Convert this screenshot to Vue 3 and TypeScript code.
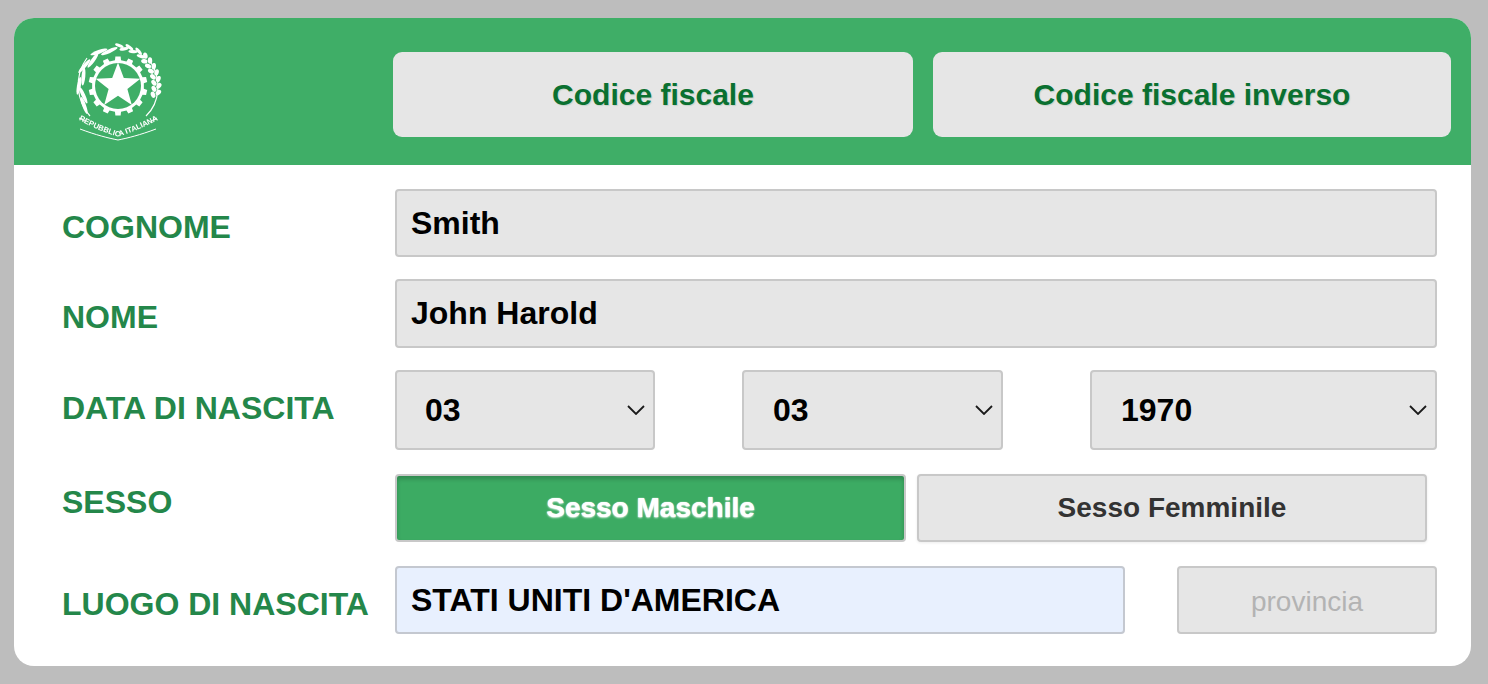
<script setup lang="ts">
import { ref } from 'vue'

const cx = 68
const cy = 61

function polar(r: number, deg: number): string {
  const a = (deg * Math.PI) / 180
  return `${(cx + r * Math.cos(a)).toFixed(2)} ${(cy + r * Math.sin(a)).toFixed(2)}`
}

function gearPath(): string {
  const teeth = 14
  const step = 360 / teeth
  let d = ''
  for (let i = 0; i < teeth; i++) {
    const s = i * step - 90
    d += `${i === 0 ? 'M' : 'L'}${polar(26, s - step * 0.26)} L${polar(29.5, s - step * 0.2)} L${polar(29.5, s + step * 0.2)} L${polar(26, s + step * 0.26)} `
  }
  return d + 'Z'
}

function starPath(r: number): string {
  let d = ''
  for (let i = 0; i < 10; i++) {
    const rad = i % 2 === 0 ? r : r * 0.42
    d += `${i === 0 ? 'M' : 'L'}${polar(rad, -90 + i * 36)} `
  }
  return d + 'Z'
}

interface Leaf { x: number; y: number; rot: number; rx: number; ry: number }

function leaves(start: number, end: number, count: number, radius: number, rx: number, ry: number, tilt: number, spread: number): Leaf[] {
  const out: Leaf[] = []
  for (let i = 0; i < count; i++) {
    const deg = start + ((end - start) * i) / (count - 1)
    const a = (deg * Math.PI) / 180
    const off = i % 2 === 0 ? spread : -spread
    out.push({
      x: cx + (radius + off) * Math.cos(a),
      y: cy + (radius + off) * Math.sin(a),
      rot: deg + 90 + (i % 2 === 0 ? tilt : -tilt),
      rx,
      ry,
    })
  }
  return out
}

const gear = gearPath()
const star = starPath(23.5)
const leftLeaves = leaves(150, 256, 8, 37.5, 9, 1.9, 10, 1.6)
const rightLeaves = [
  ...leaves(-88, -52, 6, 39, 4.6, 1.6, 20, 1.4),
  ...leaves(-48, 14, 14, 38.5, 3.2, 2.2, 35, 2.4),
]

const cognome = ref('Smith')
const nome = ref('John Harold')
const luogo = ref("STATI UNITI D'AMERICA")
const giorno = ref('03')
const mese = ref('03')
const anno = ref('1970')
</script>

<template>
  <main class="card">
    <header class="top">
      <svg class="emblem" viewBox="0 0 140 125" width="140" height="125" role="img" aria-label="Repubblica Italiana">
        <g class="soft">
          <path class="stem" d="M40 91 C26 76 24 50 37 33" />
          <path class="stem" d="M96 91 C110 78 112 54 100 36" />
          <ellipse
            v-for="(l, i) in leftLeaves"
            :key="'l' + i"
            :cx="l.x"
            :cy="l.y"
            :rx="l.rx"
            :ry="l.ry"
            :transform="`rotate(${l.rot} ${l.x} ${l.y})`"
            fill="#fff"
          />
          <ellipse
            v-for="(l, i) in rightLeaves"
            :key="'r' + i"
            :cx="l.x"
            :cy="l.y"
            :rx="l.rx"
            :ry="l.ry"
            :transform="`rotate(${l.rot} ${l.x} ${l.y})`"
            fill="#fff"
          />
          <path :d="gear" fill="#fff" />
          <circle :cx="cx" :cy="cy" r="23" fill="#3fae67" />
          <path :d="star" fill="#fff" />
          <path class="ribbon" d="M29 93 L35 96 M107 93 L101 96 M30 104 C46 110 58 113 68 115 C78 113 90 110 106 104" />
          <defs>
            <path id="ribbon-line" d="M29 95 C44 103 58 109 68 111.5 C78 109 92 103 108 95" />
          </defs>
          <text class="motto">
            <textPath href="#ribbon-line" startOffset="50%" text-anchor="middle">REPUBBLICA ITALIANA</textPath>
          </text>
        </g>
      </svg>
      <button type="button" class="tab tab-a">Codice fiscale</button>
      <button type="button" class="tab tab-b">Codice fiscale inverso</button>
    </header>

    <form class="body" @submit.prevent>
      <div class="row row-text">
        <label class="label label-field">COGNOME</label>
        <input v-model="cognome" class="field grow" type="text" />
      </div>
      <div class="row row-text row-tall">
        <label class="label label-field">NOME</label>
        <input v-model="nome" class="field grow" type="text" />
      </div>
      <div class="row row-date">
        <label class="label label-date">DATA DI NASCITA</label>
        <div class="dates">
          <div class="pick pick-day">
            <select v-model="giorno" class="select"><option>03</option></select>
            <svg class="chev" viewBox="0 0 18 10" width="18" height="10"><path d="M1 1l8 8 8-8" /></svg>
          </div>
          <div class="pick pick-month">
            <select v-model="mese" class="select shifted"><option>03</option></select>
            <svg class="chev" viewBox="0 0 18 10" width="18" height="10"><path d="M1 1l8 8 8-8" /></svg>
          </div>
          <div class="pick pick-year">
            <select v-model="anno" class="select shifted"><option>1970</option></select>
            <svg class="chev" viewBox="0 0 18 10" width="18" height="10"><path d="M1 1l8 8 8-8" /></svg>
          </div>
        </div>
      </div>
      <div class="row row-sex">
        <label class="label label-sex">SESSO</label>
        <div class="sexes">
          <button type="button" class="sex active">Sesso Maschile</button>
          <button type="button" class="sex">Sesso Femminile</button>
        </div>
      </div>
      <div class="row row-place">
        <label class="label label-field">LUOGO DI NASCITA</label>
        <div class="place">
          <input v-model="luogo" class="field luogo" type="text" />
          <input class="field provincia" type="text" placeholder="provincia" disabled />
        </div>
      </div>
    </form>
  </main>
</template>

<style>
html,
body {
  margin: 0;
  height: 684px;
  overflow: hidden;
  background: #bdbdbd;
}
</style>

<style scoped>
.card {
  box-sizing: border-box;
  width: 1457px;
  height: 648px;
  margin: 18px 0 0 14px;
  border-radius: 20px;
  overflow: hidden;
  background: #fff;
  font-family: "Liberation Sans", Arial, sans-serif;
}

.top {
  box-sizing: border-box;
  display: flex;
  align-items: center;
  height: 147px;
  padding: 6px 20px 0 36px;
  background: #3fae67;
}

.emblem {
  flex: none;
  margin: 0 203px 14px 0;
}

.soft {
  filter: blur(0.35px);
}

.stem {
  fill: none;
  stroke: #fff;
  stroke-width: 1.2;
}

.ribbon {
  fill: none;
  stroke: #fff;
  stroke-width: 1;
}

.motto {
  fill: #fff;
  font-family: "Liberation Sans", Arial, sans-serif;
  font-size: 7.6px;
  font-weight: bold;
}

.tab {
  flex: none;
  height: 85px;
  padding: 0;
  border: 0;
  border-radius: 9px;
  background: #e6e6e6;
  color: #0a7030;
  font: bold 30px "Liberation Sans", Arial, sans-serif;
  text-shadow: 1px 1px 1px rgba(10, 110, 47, 0.15);
}

.tab-a {
  width: 520px;
  margin-right: 20px;
}

.tab-b {
  width: 518px;
}

.body {
  box-sizing: border-box;
  padding: 24px 34px 32px 48px;
}

.row {
  display: flex;
  align-items: flex-start;
}

.row-text {
  height: 68px;
  margin-bottom: 22px;
}

.row-tall {
  height: 69px;
}

.row-date {
  height: 80px;
  margin-bottom: 24px;
}

.row-sex {
  height: 68px;
  margin-bottom: 24px;
}

.row-place {
  height: 68px;
}

.label {
  flex: none;
  width: 333px;
  color: #24874a;
  font-size: 32px;
  font-weight: bold;
  line-height: 37px;
}

.label-field,
.label-date {
  padding-top: 20px;
}

.label-sex {
  padding-top: 10px;
}

.field {
  box-sizing: border-box;
  height: 100%;
  min-width: 0;
  padding: 0 14px;
  border: 2px solid #c8c8c8;
  border-radius: 4px;
  outline: 0;
  background: #e6e6e6;
  color: #000;
  font: bold 32px "Liberation Sans", Arial, sans-serif;
}

.grow {
  flex: 1;
}

.dates,
.place {
  display: flex;
  justify-content: space-between;
  flex: 1;
  height: 100%;
}

.pick {
  position: relative;
  height: 100%;
}

.pick-day {
  width: 260px;
}

.pick-month {
  width: 261px;
}

.pick-year {
  width: 347px;
}

.select {
  box-sizing: border-box;
  width: 100%;
  height: 100%;
  padding: 0 0 0 28px;
  border: 2px solid #c8c8c8;
  border-radius: 4px;
  outline: 0;
  appearance: none;
  background-color: #e6e6e6;
  color: #000;
  font: bold 32px "Liberation Sans", Arial, sans-serif;
}

.select.shifted {
  padding-left: 29px;
}

.chev {
  position: absolute;
  top: 35px;
  right: 10px;
  pointer-events: none;
}

.chev path {
  fill: none;
  stroke: #1a1a1a;
  stroke-width: 1.8;
}

.sexes {
  display: flex;
  gap: 11px;
  height: 100%;
}

.sex {
  box-sizing: border-box;
  width: 510px;
  height: 100%;
  padding: 0;
  border: 2px solid #c8c8c8;
  border-radius: 4px;
  background: #e6e6e6;
  color: #333;
  font: bold 28px "Liberation Sans", Arial, sans-serif;
  box-shadow: 0 1px 3px rgba(0, 0, 0, 0.08);
}

.sex.active {
  width: 511px;
  background: #3cab63;
  color: #fff;
  text-shadow: 0 1px 2px rgba(255, 255, 255, 0.8), 0 0 1px #fff;
  box-shadow: inset 0 3px 4px rgba(0, 0, 0, 0.2);
}

.luogo {
  width: 730px;
  background: #e8f0fe;
  border-color: #c4c8d0;
}

.provincia {
  width: 260px;
  padding-top: 4px;
  text-align: center;
  font-weight: normal;
  font-size: 28px;
}

.provincia::placeholder {
  color: #b3b3b3;
  opacity: 1;
}
</style>
